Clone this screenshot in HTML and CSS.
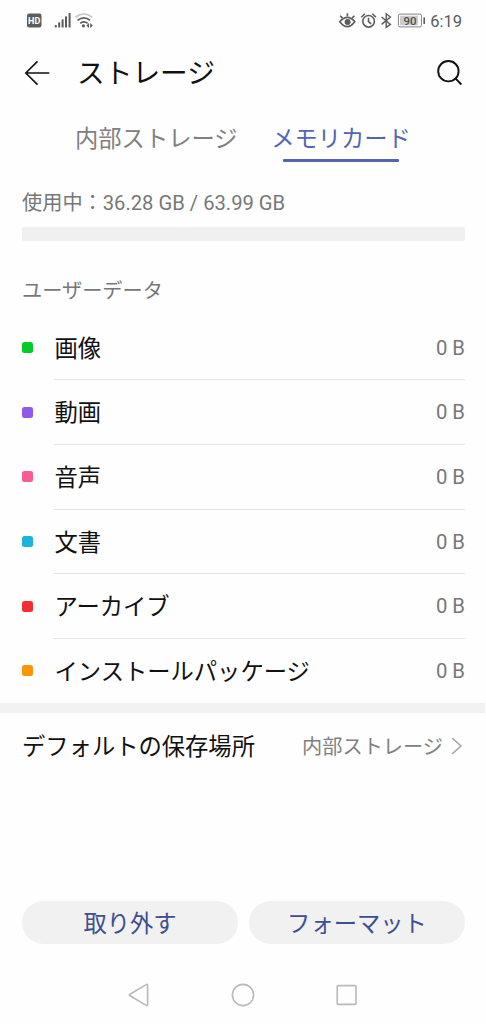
FILE: index.html
```html
<!DOCTYPE html>
<html lang="ja">
<head>
<meta charset="utf-8">
<title>ストレージ</title>
<link rel="stylesheet" href="styles.css">
</head>
<body>
<div class="status">
  <svg class="status-left" width="100" height="40" viewBox="0 0 100 40">
    <rect x="27" y="13.5" width="14.5" height="14" rx="2.2" fill="#5c5c5c"/>
    <text class="hd" x="34.2" y="24.2" text-anchor="middle">HD</text>
    <g fill="#5c5c5c">
      <rect x="54.8" y="25" width="2" height="2.5" rx=".6"/>
      <rect x="58.2" y="22.3" width="2" height="5.2" rx=".6"/>
      <rect x="61.6" y="19.3" width="2" height="8.2" rx=".6"/>
      <rect x="65" y="16.2" width="2" height="11.3" rx=".6"/>
      <rect x="68.6" y="13" width="2" height="14.5" rx=".6"/>
    </g>
    <g fill="none" stroke-width="1.7">
      <path d="M75.5 17.2Q84 10.8 92 17.2" stroke="#c4c4c4"/>
      <path d="M77.5 20.4Q84 15.4 90 20.4M80.2 23.3Q84 20.4 87.6 23.3" stroke="#5c5c5c"/>
    </g>
    <g fill="#5c5c5c"><circle cx="83.4" cy="25.8" r="1.6"/><path d="M89 23v5l-2.6-2.5zM90.2 23v5l2.6-2.5z"/></g>
  </svg>
  <div class="status-right">
    <svg width="92" height="40" viewBox="338 0 92 40">
      <g fill="none" stroke="#5c5c5c" stroke-width="1.6">
        <path d="M340.8 21.7Q348.3 13 355.8 21.7Q348.3 31.5 340.8 21.7Z"/>
        <path d="M341.2 15.7l2.3 2.4M348.4 13.2v3M355.4 15.7l-2.3 2.4"/>
        <circle cx="369.6" cy="21.3" r="5.8"/>
        <path d="M362.3 17.2l3.5-3.5M376.9 17.2l-3.5-3.5M369.5 17.8v3.8l2.7 2.2"/>
        <path d="M382.6 17l8.8 7.4-4.2 3v-13.6l4.2 3.2-8.8 7.4" stroke-width="1.4"/>
      </g>
      <circle cx="348.6" cy="22.1" r="3" fill="#5c5c5c"/>
      <rect x="399.4" y="14.1" width="23" height="12.8" rx="1.5" fill="#fefefe" stroke="#848484"/>
      <rect x="401" y="15.7" width="18" height="9.6" fill="#ccc"/>
      <text class="charge" x="411" y="25" text-anchor="middle">90</text>
      <rect x="424.4" y="17.3" width="1.6" height="6.6" rx=".5" fill="#5c5c5c"/>
    </svg>
    <span class="clock">6:19</span>
  </div>
</div>
<header class="header">
  <svg width="26" height="26" viewBox="0 0 26 26" fill="none" stroke="#111" stroke-width="1.6"><path d="M25.3 13H2M13.5 1.4L1.8 13l11.7 11.6"/></svg>
  <h1 class="title">ストレージ</h1>
  <svg width="28" height="28" viewBox="0 0 28 28" fill="none" stroke="#111" stroke-width="1.9"><circle cx="12.4" cy="12.2" r="10.2"/><path d="M19.4 19.3l6 6.2"/></svg>
</header>
<nav class="tabs">
  <span class="tab">内部ストレージ</span>
  <span class="tab active">メモリカード</span>
</nav>
<main>
  <section class="usage">
    <div class="usage-text">使用中：36.28 GB / 63.99 GB</div>
    <div class="bar"></div>
  </section>
  <h2 class="section-title">ユーザーデータ</h2>
  <ul class="list">
    <li class="row"><i class="dot green"></i><div class="item"><span>画像</span><span class="size">0 B</span></div></li>
    <li class="row"><i class="dot purple"></i><div class="item"><span>動画</span><span class="size">0 B</span></div></li>
    <li class="row"><i class="dot pink"></i><div class="item"><span>音声</span><span class="size">0 B</span></div></li>
    <li class="row"><i class="dot cyan"></i><div class="item"><span>文書</span><span class="size">0 B</span></div></li>
    <li class="row"><i class="dot red"></i><div class="item"><span>アーカイブ</span><span class="size">0 B</span></div></li>
    <li class="row"><i class="dot orange"></i><div class="item"><span>インストールパッケージ</span><span class="size">0 B</span></div></li>
  </ul>
  <div class="separator"></div>
  <div class="default">
    <span class="label">デフォルトの保存場所</span>
    <span class="value">内部ストレージ</span>
    <svg width="12" height="18" viewBox="0 0 12 18" fill="none" stroke="#a8a8a8" stroke-width="1.6"><path d="M1.2 1.2L10 9l-8.8 7.8"/></svg>
  </div>
</main>
<div class="actions">
  <button class="button">取り外す</button>
  <button class="button">フォーマット</button>
</div>
<div class="navbar">
  <svg width="22" height="24" viewBox="0 0 22 24"><path d="M18.2 1.6Q19.6.9 19.6 2.4v19.2Q19.6 23.1 18.2 22.4L2 12.8Q.8 12 2 11.2Z"/></svg>
  <svg width="24" height="24" viewBox="0 0 24 24"><circle cx="12" cy="12" r="10.6"/></svg>
  <svg width="22" height="22" viewBox="0 0 22 22"><rect x="1.2" y="1.6" width="18.8" height="18.8" rx=".8"/></svg>
</div>
</body>
</html>
```

FILE: styles.css
```css
* { box-sizing: border-box; }
body {
  margin: 0;
  width: 486px;
  height: 1024px;
  display: flex;
  flex-direction: column;
  overflow: hidden;
  background: #fefefe;
  color: #111;
  font-family: Roboto, "Noto Sans CJK JP", sans-serif;
  font-size: 23.3px;
  line-height: 1;
}
svg { display: block; flex: none; }
span { white-space: nowrap; }
.status { height: 40px; display: flex; justify-content: space-between; padding-right: 24px; }
.status-right { display: flex; align-items: center; gap: 1px; }
.hd { font: 700 9px Roboto, sans-serif; fill: #fefefe; }
.charge { font: 500 11.5px Roboto, sans-serif; fill: #505050; }
.clock { font-size: 16.5px; color: #5c5c5c; padding-top: 4px; }
.header { height: 66px; display: flex; align-items: center; padding: 0 22px 0 24px; }
.title { flex: 1; margin: 0 0 0 27px; padding-top: 2px; font-size: 27.7px; font-weight: 400; }
.tabs { height: 56px; display: flex; gap: 34px; padding: 20px 0 0 75px; color: #808080; }
.tab { height: 36px; padding-top: 2px; }
.active { color: #5366b5; display: flex; flex-direction: column; align-items: center; margin-left: -.5px; }
.active::after { content: ""; width: 116px; height: 2.5px; margin-top: 8px; border-radius: 1px; background: #5366ac; }
.usage { padding: 32px 21px 0 22px; }
.usage-text { height: 33px; font-size: 20.2px; line-height: 19px; color: #777; }
.bar { height: 13.5px; border-radius: 2px; background: #f0f0f0; }
.section-title { margin: 40px 22px 0; height: 35px; font-size: 20.2px; line-height: 20px; font-weight: 400; color: #777; }
.list { list-style: none; margin: 0; padding: 0 21px 0 22px; }
.row { height: 64.7px; display: flex; align-items: center; gap: 21px; }
.row:last-child { height: 64px; }
.item { flex: 1; height: 100%; display: flex; align-items: center; justify-content: space-between; padding: 4px 0 0 .5px; border-bottom: 1px solid #e5e5e5; }
.row:last-child .item { border-color: transparent; }
.size { font-size: 20.3px; color: #777; margin-top: -3px; }
.dot { width: 11px; height: 11px; margin-top: -1px; border-radius: 2.5px; }
.green { background: #05cb29; }
.purple { background: #9059e8; }
.pink { background: #f95b94; }
.cyan { background: #1bb2db; }
.red { background: #f52d34; }
.orange { background: #fc9608; }
.separator { height: 10.5px; margin-right: 1px; background: #f2f2f2; }
.default { height: 66px; display: flex; align-items: center; padding: 0 23px 0 22px; }
.label { padding-top: 3px; }
.value { margin: 0 8px 0 auto; padding-top: 2px; font-size: 20.2px; color: #808080; }
.actions { margin-top: auto; height: 43px; display: flex; gap: 11px; padding: 0 21px 0 22px; }
.button { flex: 1; border: 0; padding: 4px 0 0; border-radius: 22px; background: #f1f1f1; color: #3f4e92; font: inherit; }
.navbar { height: 80px; display: flex; align-items: center; justify-content: center; gap: 81px; padding: 22px 0 0; }
.navbar svg { fill: none; stroke: #b9b9b9; stroke-width: 1.6; }
```
